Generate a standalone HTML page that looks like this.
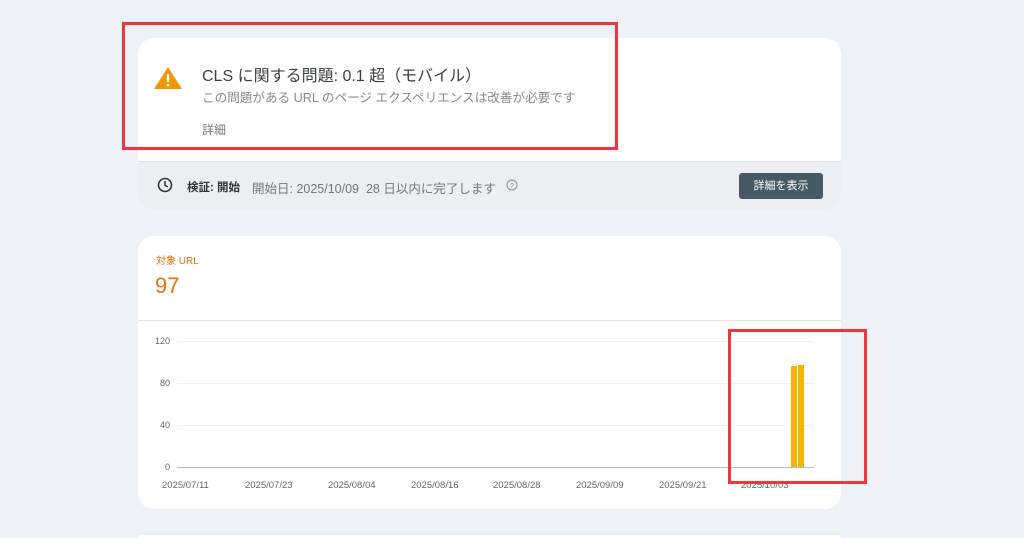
<!DOCTYPE html>
<html style="width:1024px;height:538px;overflow:hidden"><head><meta charset="utf-8"><style>
*{margin:0;padding:0;box-sizing:border-box}
body{width:1024px;height:538px;background:#eef1f6;position:relative;overflow:hidden;font-family:"Liberation Sans","Noto Sans CJK JP",sans-serif}
.card{position:absolute;left:138px;width:703px;background:#fff;border-radius:16px;overflow:hidden}
.a{position:absolute;white-space:nowrap}
.red{position:absolute;border:3px solid #f0363d}
.gl{position:absolute;left:177px;width:637px;height:1px;background:#f1f1f1}
.yl{position:absolute;width:30px;left:140px;text-align:right;font-size:9px;color:#666}
.xl{position:absolute;top:480px;font-size:9.5px;color:#666}
</style></head><body>
<div class="card" style="top:38px;height:172px">
  <div style="position:absolute;left:0;top:123px;width:703px;height:49px;background:#eceff2;border-top:1px solid #dde1e6"></div>
</div>
<svg class="a" style="left:153px;top:66px" width="30" height="24" viewBox="0 0 30 24"><path d="M15 1 L29 23 L1 23 Z" fill="#f29900"/><rect x="13.8" y="8" width="2.4" height="8" fill="#fff"/><rect x="13.8" y="18" width="2.4" height="2.4" fill="#fff"/></svg>
<div class="a" style="left:202px;top:62px;font-size:16px;color:#3c4043">CLS に関する問題: 0.1 超（モバイル）</div>
<div class="a" style="left:202px;top:87px;font-size:12.6px;color:#888">この問題がある URL のページ エクスペリエンスは改善が必要です</div>
<div class="a" style="left:202px;top:121px;font-size:12px;color:#777">詳細</div>
<svg class="a" style="left:157px;top:177px" width="16" height="16" viewBox="0 0 16 16"><circle cx="8" cy="8" r="6.5" fill="none" stroke="#333" stroke-width="1.6"/><path d="M8 4v4.3l2.7 1.6" fill="none" stroke="#333" stroke-width="1.5"/></svg>
<div class="a" style="left:187px;top:179px;font-size:11.5px;color:#333;font-weight:bold">検証: 開始</div>
<div class="a" style="left:252px;top:178px;font-size:12.5px;color:#777">開始日: 2025/10/09 &nbsp;28 日以内に完了します</div>
<svg class="a" style="left:506px;top:179px" width="12" height="12" viewBox="0 0 12 12"><circle cx="6" cy="6" r="5" fill="none" stroke="#888"/><text x="6" y="9" font-size="7" text-anchor="middle" fill="#888" font-family="Liberation Sans">?</text></svg>
<div class="a" style="left:739px;top:173px;width:84px;height:26px;background:#455a64;border-radius:3px;color:#fff;font-size:11px;text-align:center;line-height:26px">詳細を表示</div>

<div class="card" style="top:236px;height:273px">
  <div style="position:absolute;left:0;top:84px;width:703px;height:1px;background:#e3e3e3"></div>
</div>
<div class="a" style="left:156px;top:252px;font-size:10px;color:#e8710a">対象 URL</div>
<div class="a" style="left:155px;top:273px;font-size:22px;color:#e8710a">97</div>
<div class="gl" style="top:341px"></div><div class="gl" style="top:383px"></div><div class="gl" style="top:425px"></div>
<div class="gl" style="top:467px;background:#bbb"></div>
<div class="yl" style="top:336px">120</div><div class="yl" style="top:378px">80</div><div class="yl" style="top:420px">40</div><div class="yl" style="top:462px">0</div>
<div class="a" style="left:791px;top:366px;width:6px;height:101px;background:#f4b400"></div>
<div class="a" style="left:798px;top:365px;width:6px;height:102px;background:#f4b400"></div>
<div class="xl" style="left:162px">2025/07/11</div><div class="xl" style="left:245px">2025/07/23</div><div class="xl" style="left:328px">2025/08/04</div><div class="xl" style="left:411px">2025/08/16</div><div class="xl" style="left:493px">2025/08/28</div><div class="xl" style="left:576px">2025/09/09</div><div class="xl" style="left:659px">2025/09/21</div><div class="xl" style="left:741px">2025/10/03</div>
<div class="card" style="top:535px;height:3px;border-radius:16px 16px 0 0"></div>
<div class="red" style="left:122px;top:22px;width:496px;height:128px"></div>
<div class="red" style="left:728px;top:329px;width:139px;height:155px"></div>
</body></html>
